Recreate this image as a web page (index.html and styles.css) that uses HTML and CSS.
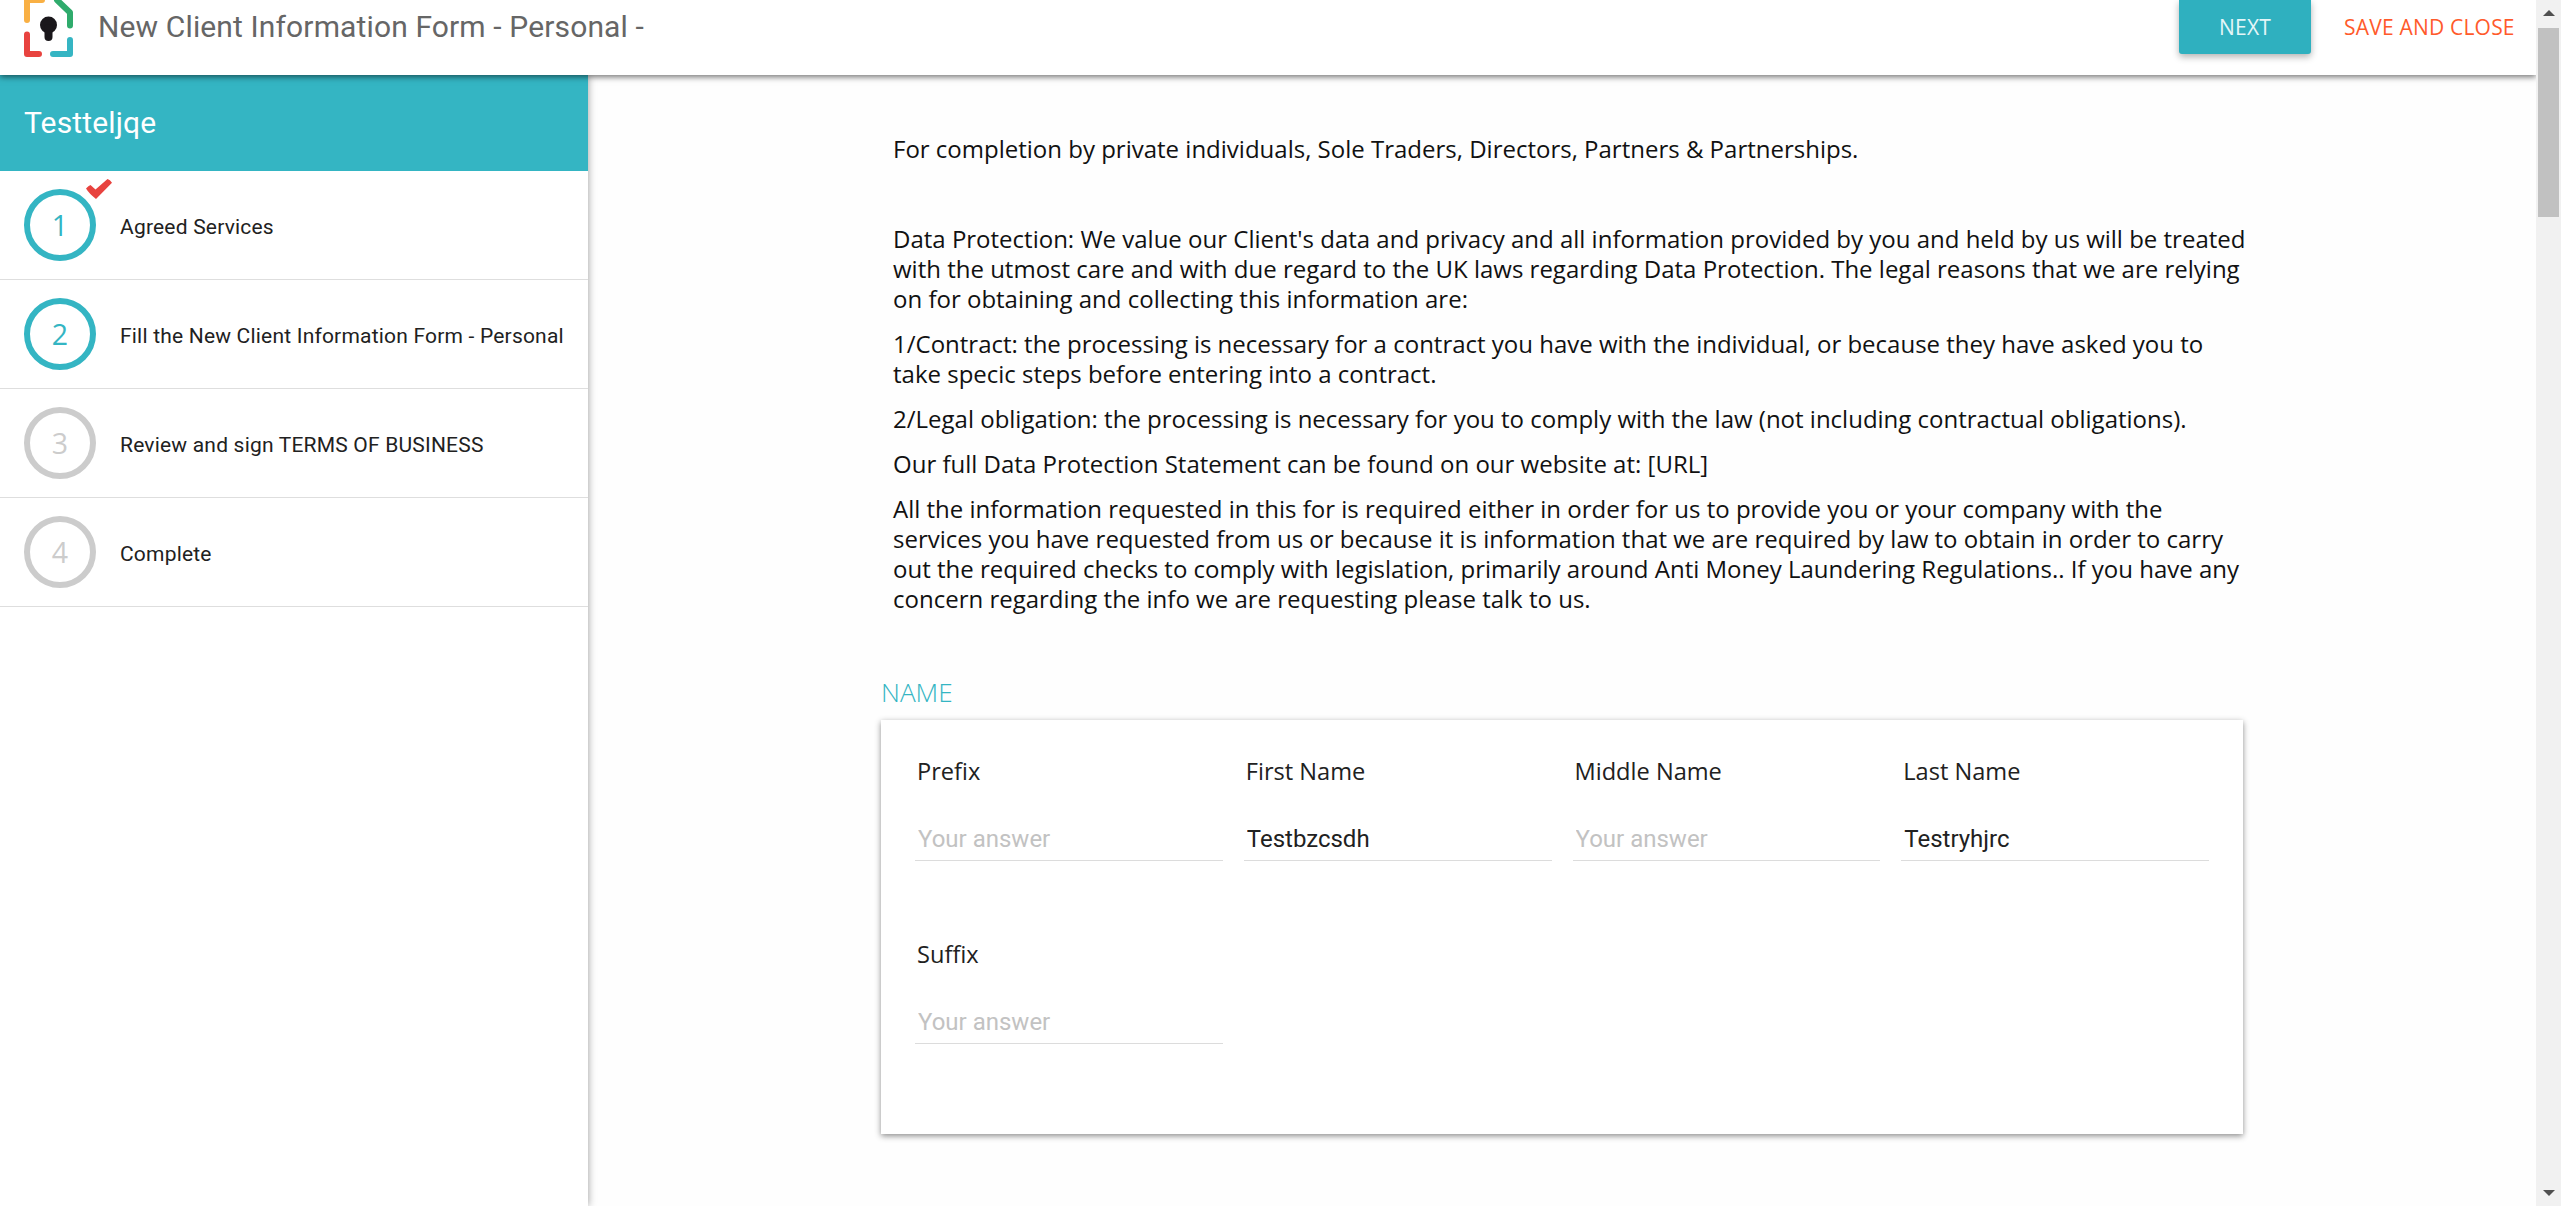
FILE: index.html
```html
<!DOCTYPE html>
<html lang="en">
<head>
<meta charset="utf-8">
<title>New Client Information Form</title>
<link rel="stylesheet" href="styles.css">
</head>
<body>
<div class="app">
  <div class="page">
    <header class="topbar">
      <svg class="logo" viewBox="0 0 50 58" fill="none" stroke-width="6" stroke-linecap="round" stroke-linejoin="round">
        <path stroke="#f9b044" d="M3 20V0H18"/>
        <path stroke="#2fab6c" d="M33 0L46 12.500V25.500"/>
        <path stroke="#e8433f" d="M3 34.500V54H15"/>
        <path stroke="#35b5c3" d="M29 54H46V40"/>
        <circle cx="24.500" cy="25" r="8.500" fill="#1a171b" stroke="none"/>
        <path stroke="#1a171b" stroke-width="8" d="M24.500 28V37"/>
      </svg>
      <h1 class="title">New Client Information Form - Personal -</h1>
      <button class="btn btn-next">NEXT</button>
      <button class="btn btn-save">SAVE AND CLOSE</button>
    </header>
    <div class="columns">
      <aside class="sidebar">
        <h2 class="client">Testteljqe</h2>
        <ol class="steps">
          <li class="step done"><span class="num">1<svg class="tick" viewBox="0 0 26 22" preserveAspectRatio="none"><path fill="#e8433f" d="M0 10.500Q2.500 7 4.500 6.500L9.500 11.500L21.500 0Q24 1 26 4L10 22Q3 16 0 10.500Z"/></svg></span><span class="step-name">Agreed Services</span></li>
          <li class="step active"><span class="num">2</span><span class="step-name">Fill the New Client Information Form - Personal</span></li>
          <li class="step"><span class="num">3</span><span class="step-name">Review and sign TERMS OF BUSINESS</span></li>
          <li class="step"><span class="num">4</span><span class="step-name">Complete</span></li>
        </ol>
      </aside>
      <main class="content">
        <section class="intro">
          <p>For completion by private individuals, Sole Traders, Directors, Partners &amp; Partnerships.</p>
          <p>&nbsp;</p>
          <p>Data Protection: We value our Client's data and privacy and all information provided by you and held by us will be treated<br>with the utmost care and with due regard to the UK laws regarding Data Protection. The legal reasons that we are relying<br>on for obtaining and collecting this information are:</p>
          <p>1/Contract: the processing is necessary for a contract you have with the individual, or because they have asked you to<br>take specic steps before entering into a contract.</p>
          <p>2/Legal obligation: the processing is necessary for you to comply with the law (not including contractual obligations).</p>
          <p>Our full Data Protection Statement can be found on our website at: [URL]</p>
          <p>All the information requested in this for is required either in order for us to provide you or your company with the<br>services you have requested from us or because it is information that we are required by law to obtain in order to carry<br>out the required checks to comply with legislation, primarily around Anti Money Laundering Regulations.. If you have any<br>concern regarding the info we are requesting please talk to us.</p>
        </section>
        <h3 class="section-title">NAME</h3>
        <section class="card">
          <label class="field"><span class="label">Prefix</span><input class="answer" placeholder="Your answer"></label>
          <label class="field"><span class="label">First Name</span><input class="answer" value="Testbzcsdh"></label>
          <label class="field"><span class="label">Middle Name</span><input class="answer" placeholder="Your answer"></label>
          <label class="field"><span class="label">Last Name</span><input class="answer" value="Testryhjrc"></label>
          <label class="field"><span class="label">Suffix</span><input class="answer" placeholder="Your answer"></label>
        </section>
      </main>
    </div>
  </div>
  <div class="scrollbar"><i class="arrow up"></i><i class="thumb"></i><i class="arrow down"></i></div>
</div>
</body>
</html>
```
FILE: styles.css
```css
* { box-sizing: border-box; margin: 0; padding: 0; }
body { background: #fefefe; color: #212121; font-family: Roboto, sans-serif; overflow: hidden; }
.app { display: flex; height: 1206px; }
.page { flex: 1; display: flex; flex-direction: column; min-width: 0; overflow: hidden; }

.topbar { position: relative; z-index: 2; display: flex; align-items: flex-start; height: 75px; padding-left: 24px; background: #fff; box-shadow: 0 2px 6px rgba(0,0,0,.55); }
.logo { width: 50px; height: 58px; flex: none; }
.title { flex: 1; padding-left: 24px; font-size: 30px; font-weight: 400; letter-spacing: .13px; line-height: 54px; color: #666; }
.btn { height: 54px; border: 0; background: none; font: 400 21px/54px "Open Sans", sans-serif; letter-spacing: .2px; }
.btn-next { width: 132px; border-radius: 0 0 3px 3px; background: #2fb0bf; color: #e4f6f8; box-shadow: 0 3px 7px rgba(0,0,0,.3); }
.btn-save { width: 225px; padding-left: 33px; color: #ff5a2b; text-align: left; }

.columns { flex: 1; display: flex; }
.sidebar { width: 588px; background: #fff; box-shadow: 0 0 8px rgba(0,0,0,.4); }
.client { height: 96px; padding-left: 24px; background: #34b5c3; color: #fff; font-size: 30px; font-weight: 400; letter-spacing: .15px; line-height: 96px; }
.steps { list-style: none; }
.step { display: flex; align-items: center; gap: 24px; height: 109px; padding-left: 24px; border-bottom: 1px solid #dedede; font-size: 21px; letter-spacing: .2px; }
.step-name { padding-top: 3px; }
.num { position: relative; width: 72px; height: 72px; border: 6px solid #ccc; border-radius: 50%; color: #ccc; font: 400 28.500px/60px "Open Sans", sans-serif; text-align: center; }
.done .num, .active .num { border-color: #34b5c3; color: #34b5c3; }
.tick { position: absolute; right: -22px; top: -16px; width: 26px; height: 20px; }

.content { flex: 1; min-width: 0; padding: 59px 0 0 293px; font-family: "Open Sans", sans-serif; }
.intro { padding-left: 12px; font-size: 24px; line-height: 30px; color: #111; white-space: nowrap; }
.intro p { margin-bottom: 15px; }
.section-title { height: 46px; margin-top: 60px; font-size: 26.200px; font-weight: 300; line-height: 36px; color: #34b5c3; }
.card { display: grid; grid-template-columns: repeat(4, minmax(0, 1fr)); grid-auto-rows: 183px; column-gap: 21px; width: 1362px; height: 414px; padding: 33px 34px 0; background: #fff; box-shadow: 0 2px 6px rgba(0,0,0,.45); }
.field { display: flex; flex-direction: column; }
.label { height: 36px; padding-left: 2px; font-size: 23.600px; line-height: 36px; }
.answer { width: 100%; height: 55px; margin-top: 17px; padding: 12px 0 0 3px; border: 0; border-bottom: 1px solid #dcdcdc; background: none; color: #212121; font: 400 24px Roboto, sans-serif; }
.answer::placeholder { color: #c2c2c2; }

.scrollbar { display: flex; flex-direction: column; align-items: center; width: 25px; padding: 10px 0; background: #f1f1f1; }
.thumb { width: 21px; height: 189px; margin-top: 12px; background: #c1c1c1; }
.arrow { border: 6px solid transparent; }
.up { border-top: 0; border-bottom-color: #505050; }
.down { margin-top: auto; border-bottom: 0; border-top-color: #505050; }
```
